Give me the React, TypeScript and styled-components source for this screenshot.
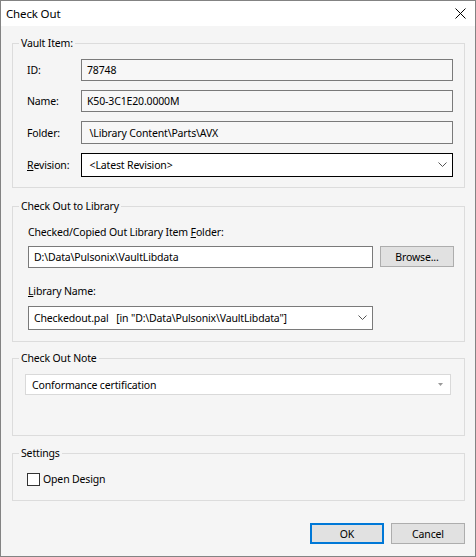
import styled, { createGlobalStyle } from "styled-components";

const GlobalStyle = createGlobalStyle`
  html, body {
    margin: 0;
    padding: 0;
    background: #ffffff;
  }
  * {
    box-sizing: border-box;
  }
`;

const Window = styled.div`
  width: 476px;
  height: 557px;
  border: 1px solid #838383;
  display: flex;
  flex-direction: column;
  font-family: "Noto Sans", "Open Sans", sans-serif;
  font-size: 10.5px;
  letter-spacing: -0.15px;
  color: #000;
`;

const TitleBar = styled.div`
  height: 25px;
  background: #fff;
  display: flex;
  align-items: center;
  justify-content: space-between;
  padding: 0 9px 0 5px;
`;

const Title = styled.span`
  font-size: 11.5px;
  line-height: 16px;
`;

const Body = styled.div`
  flex: 1;
  background: #f5f5f5;
  display: flex;
  flex-direction: column;
  padding: 9px 10px 12px 11px;
`;

// padding-left differs per group; the legend is pulled back so all captions line up
const Group = styled.fieldset<{ $mt?: number; $pad: [number, number, number, number] }>`
  margin: ${({ $mt }) => $mt ?? 0}px 0 0 0;
  padding: ${({ $pad }) => $pad.map((p) => `${p}px`).join(" ")};
  border: 1px solid #dcdcdc;
  min-inline-size: 0;

  & > legend {
    margin-left: ${({ $pad }) => 6 - $pad[3]}px;
  }
`;

const Legend = styled.legend`
  padding: 0 2px;
  line-height: 16px;
`;

const FormGrid = styled.div`
  display: grid;
  grid-template-columns: 54px 1fr;
  row-gap: 9px;
  align-items: center;
`;

const Label = styled.label<{ $mt?: number }>`
  display: block;
  line-height: 16px;
  margin-top: ${({ $mt }) => $mt ?? 0}px;
`;

const ReadOnly = styled.div<{ $h: number }>`
  height: ${({ $h }) => $h}px;
  border: 1px solid #7a7a7a;
  background: #f7f7f7;
  display: flex;
  align-items: center;
  padding-left: 5px;
  white-space: pre;
`;

const Select = styled.div<{ $h: number; $dark?: boolean; $w?: number }>`
  height: ${({ $h }) => $h}px;
  width: ${({ $w }) => ($w ? `${$w}px` : "auto")};
  border: 1px solid ${({ $dark }) => ($dark ? "#000" : "#7a7a7a")};
  background: #fff;
  display: flex;
  align-items: center;
  justify-content: space-between;
  padding: 0 5px 0 5px;
  white-space: pre;
`;

const InputRow = styled.div`
  display: flex;
  gap: 7px;
  margin-top: 6px;
  align-items: flex-start;
`;

const TextInput = styled.div`
  flex: 1;
  height: 22px;
  border: 1px solid #7a7a7a;
  background: #fff;
  display: flex;
  align-items: center;
  padding-left: 5px;
`;

const Button = styled.button<{ $primary?: boolean }>`
  width: 74px;
  height: 21px;
  margin: 0;
  padding: 0;
  font: inherit;
  letter-spacing: inherit;
  color: #000;
  background: #e1e1e1;
  border: ${({ $primary }) => ($primary ? "2px solid #0078d7" : "1px solid #adadad")};
`;

const SelectWrap = styled.div`
  margin-top: 7px;
`;

const Combo = styled.div`
  height: 21px;
  border: 1px solid #d9d9d9;
  background: #fff;
  display: flex;
  align-items: center;
  justify-content: space-between;
  padding: 0 7px 0 6px;
`;

const CheckRow = styled.div`
  display: flex;
  align-items: center;
  gap: 3px;
  line-height: 16px;
`;

const CheckBox = styled.span`
  width: 13px;
  height: 13px;
  border: 1px solid #333;
  background: #fff;
`;

const ButtonRow = styled.div`
  margin-top: auto;
  display: flex;
  justify-content: flex-end;
  gap: 7px;
`;

const Chevron = () => (
  <svg width="9" height="6" viewBox="0 0 9 6">
    <path d="M0.5 0.5 L4.5 4.5 L8.5 0.5" fill="none" stroke="#555" strokeWidth="1" />
  </svg>
);

const Triangle = () => (
  <svg width="5" height="3" viewBox="0 0 5 3">
    <path d="M0 0 H5 L2.5 3 Z" fill="#999" />
  </svg>
);

const CloseIcon = () => (
  <svg width="11" height="11" viewBox="0 0 11 11">
    <path d="M0.5 0.5 L10.5 10.5 M10.5 0.5 L0.5 10.5" stroke="#000" strokeWidth="1" />
  </svg>
);

export default function App() {
  return (
    <>
      <GlobalStyle />
      <Window>
        <TitleBar>
          <Title>Check Out</Title>
          <CloseIcon />
        </TitleBar>
        <Body>
          <Group $pad={[8, 11, 10, 14]}>
            <Legend>Vault Item:</Legend>
            <FormGrid>
              <Label>ID:</Label>
              <ReadOnly $h={22}>78748</ReadOnly>
              <Label>Name:</Label>
              <ReadOnly $h={22}>K50-3C1E20.0000M</ReadOnly>
              <Label>Folder:</Label>
              <ReadOnly $h={23}> \Library Content\Parts\AVX</ReadOnly>
              <Label>
                <u>R</u>evision:
              </Label>
              <Select $h={24} $dark>
                <span> &lt;Latest Revision&gt;</span>
                <Chevron />
              </Select>
            </FormGrid>
          </Group>

          <Group $mt={10} $pad={[10, 10, 11, 15]}>
            <Legend>Check Out to Library</Legend>
            <Label>
              Checked/Copied Out Library Item <u>F</u>older:
            </Label>
            <InputRow>
              <TextInput>D:\Data\Pulsonix\VaultLibdata</TextInput>
              <Button>Browse...</Button>
            </InputRow>
            <Label $mt={15}>
              <u>L</u>ibrary Name:
            </Label>
            <SelectWrap>
              <Select $h={24} $w={345}>
                <span>Checkedout.pal   [in "D:\Data\Pulsonix\VaultLibdata"]</span>
                <Chevron />
              </Select>
            </SelectWrap>
          </Group>

          <Group $mt={8} $pad={[8, 13, 40, 12]}>
            <Legend>Check Out Note</Legend>
            <Combo>
              <span>Conformance certification</span>
              <Triangle />
            </Combo>
          </Group>

          <Group $mt={9} $pad={[10, 10, 13, 14]}>
            <Legend>Settings</Legend>
            <CheckRow>
              <CheckBox />
              <span>Open Design</span>
            </CheckRow>
          </Group>

          <ButtonRow>
            <Button $primary>OK</Button>
            <Button>Cancel</Button>
          </ButtonRow>
        </Body>
      </Window>
    </>
  );
}
